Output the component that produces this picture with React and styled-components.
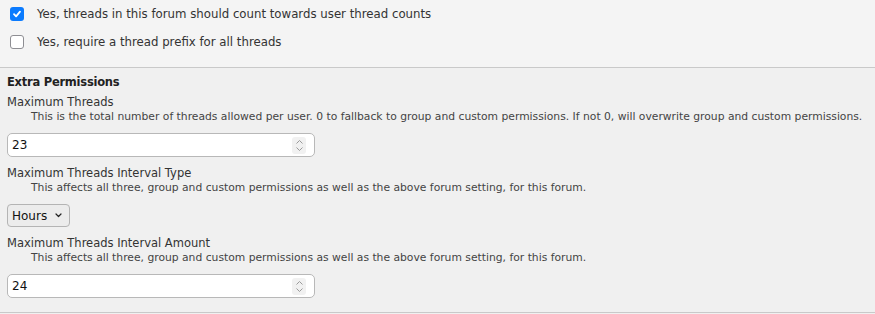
import React from 'react';
import styled, { createGlobalStyle } from 'styled-components';

const Global = createGlobalStyle`
  html, body {
    margin: 0;
    padding: 0;
    background: #f0f0f0;
  }
  body {
    font-family: "DejaVu Sans", Verdana, sans-serif;
    color: #333;
  }
`;

const Page = styled.div`
  width: 875px;
  height: 314px;
  overflow: hidden;
  background: #f0f0f0;
`;

const TopBlock = styled.div`
  background: #f4f4f4;
  border-bottom: 1px solid #c9c9c9;
  padding: 7px 0 18px 10px;
  display: flex;
  flex-direction: column;
  gap: 14px;
`;

const CheckRow = styled.label`
  display: flex;
  align-items: center;
  gap: 13px;
  font-size: 11.75px;
  line-height: 14px;
  color: #333;
`;

const Box = styled.span`
  width: 14px;
  height: 14px;
  box-sizing: border-box;
  border-radius: 3px;
  display: flex;
  align-items: center;
  justify-content: center;
  background: ${p => (p.checked ? '#0b7bfe' : '#fff')};
  border: ${p => (p.checked ? 'none' : '1px solid #8e8e93')};
`;

const Section = styled.div`
  padding: 7px 0 14px 7px;
  border-bottom: 1px solid #c9c9c9;
  display: flex;
  flex-direction: column;
`;

const SectionTitle = styled.div`
  font-weight: bold;
  font-size: 11.5px;
  letter-spacing: -0.25px;
  line-height: 14px;
  margin-bottom: 6px;
  color: #222;
`;

const Field = styled.div`
  display: flex;
  flex-direction: column;
  margin-bottom: ${p => (p.last ? '0' : '9px')};
`;

const Label = styled.div`
  font-size: 11.5px;
  line-height: 15px;
  color: #333;
`;

const Desc = styled.div`
  font-size: 10.75px;
  line-height: 14px;
  color: #444;
  padding-left: 24px;
  margin-bottom: 9px;
  white-space: nowrap;
`;

const InputBox = styled.div`
  width: 308px;
  height: 24px;
  box-sizing: border-box;
  border: 1px solid #b8b8b8;
  border-radius: 5px;
  background: #fff;
  display: flex;
  align-items: center;
  padding: 0 8px 0 4px;
`;

const TextInput = styled.input`
  flex: 1;
  min-width: 0;
  border: none;
  outline: none;
  background: transparent;
  font-family: "DejaVu Sans", Verdana, sans-serif;
  font-size: 12px;
  color: #111;
  padding: 0;
`;

const Spin = styled.span`
  width: 14px;
  height: 17px;
  border-radius: 3px;
  background: #f1f1f1;
  display: flex;
  align-items: center;
  justify-content: center;
`;

const SelectBox = styled.div`
  width: 63px;
  height: 23px;
  box-sizing: border-box;
  border: 1px solid #b4b4b4;
  border-radius: 4px;
  background: #ececec;
  display: flex;
  align-items: center;
  padding: 0 7px 0 4px;
  gap: 4px;
`;

const Select = styled.select`
  appearance: none;
  border: none;
  outline: none;
  background: transparent;
  font-family: "DejaVu Sans", Verdana, sans-serif;
  font-size: 12px;
  color: #111;
  padding: 0;
  flex: 1;
  width: 40px;
`;

const Check = () => (
  <svg width="10" height="10" viewBox="0 0 10 10">
    <path d="M2 5.2 L4.1 7.4 L8 2.6" fill="none" stroke="#fff" strokeWidth="1.8" strokeLinecap="round" strokeLinejoin="round" />
  </svg>
);

const Spinner = () => (
  <Spin>
    <svg width="9" height="13" viewBox="0 0 9 13">
      <path d="M1.5 4.5 L4.5 1.5 L7.5 4.5" fill="none" stroke="#9a9a9a" strokeWidth="1" />
      <path d="M1.5 8.5 L4.5 11.5 L7.5 8.5" fill="none" stroke="#9a9a9a" strokeWidth="1" />
    </svg>
  </Spin>
);

const Chevron = () => (
  <svg width="7" height="5" viewBox="0 0 7 5">
    <path d="M1 1 L3.5 3.5 L6 1" fill="none" stroke="#222" strokeWidth="1.2" strokeLinecap="round" strokeLinejoin="round" />
  </svg>
);

const NumberField = ({ value }) => (
  <InputBox>
    <TextInput defaultValue={value} />
    <Spinner />
  </InputBox>
);

export default function App() {
  return (
    <Page>
      <Global />
      <TopBlock>
        <CheckRow>
          <Box checked><Check /></Box>
          Yes, threads in this forum should count towards user thread counts
        </CheckRow>
        <CheckRow>
          <Box />
          Yes, require a thread prefix for all threads
        </CheckRow>
      </TopBlock>
      <Section>
        <SectionTitle>Extra Permissions</SectionTitle>
        <Field>
          <Label>Maximum Threads</Label>
          <Desc>This is the total number of threads allowed per user. 0 to fallback to group and custom permissions. If not 0, will overwrite group and custom permissions.</Desc>
          <NumberField value="23" />
        </Field>
        <Field>
          <Label>Maximum Threads Interval Type</Label>
          <Desc>This affects all three, group and custom permissions as well as the above forum setting, for this forum.</Desc>
          <SelectBox>
            <Select defaultValue="hours">
              <option value="hours">Hours</option>
              <option value="days">Days</option>
            </Select>
            <Chevron />
          </SelectBox>
        </Field>
        <Field last>
          <Label>Maximum Threads Interval Amount</Label>
          <Desc>This affects all three, group and custom permissions as well as the above forum setting, for this forum.</Desc>
          <NumberField value="24" />
        </Field>
      </Section>
    </Page>
  );
}
